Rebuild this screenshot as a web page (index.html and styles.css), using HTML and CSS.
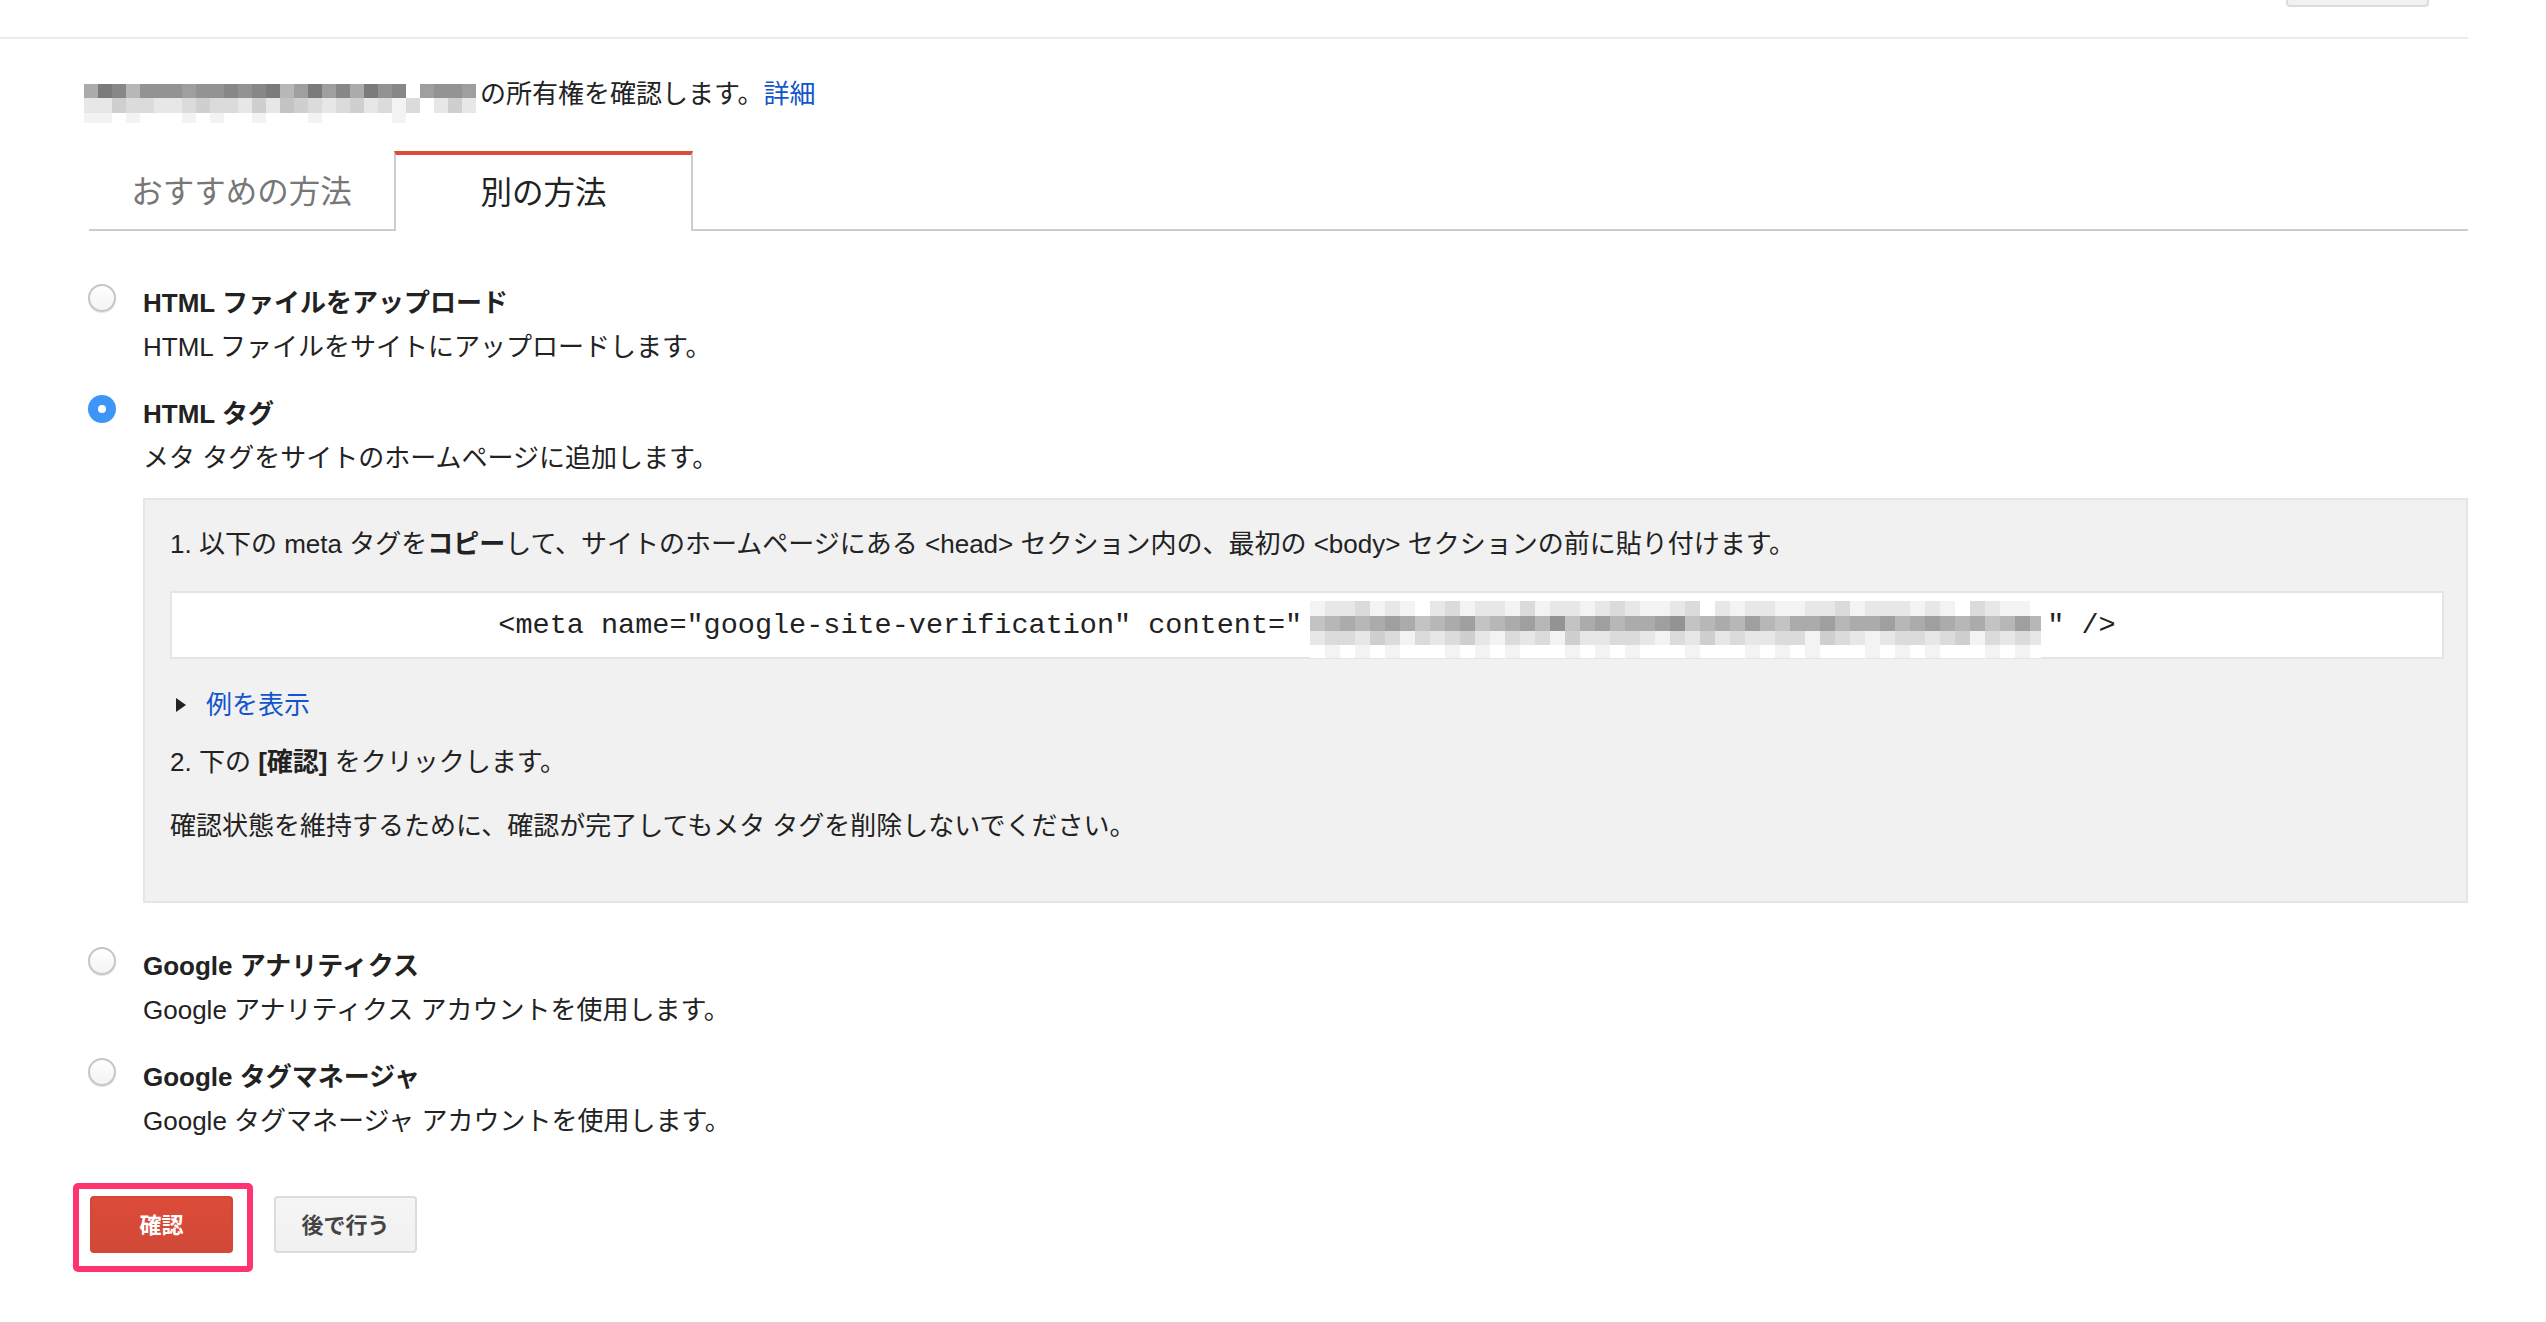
FILE: index.html
```html
<!DOCTYPE html>
<html lang="ja">
<head>
<meta charset="utf-8">
<title>所有権の確認</title>
<link rel="stylesheet" href="styles.css">
</head>
<body>

<div id="header">
  <button class="header-btn" type="button"></button>
</div>

<div id="main">
  <div class="intro">
    <span class="mosaic mosaic-domain" id="domainMosaic"></span>
    <span class="intro-text">の所有権を確認します。<a href="#">詳細</a></span>
  </div>

  <div class="tabs">
    <div class="tab">おすすめの方法</div>
    <div class="tab active">別の方法</div>
  </div>

  <div class="methods">
    <div class="option">
      <span class="radio"></span>
      <div class="option-body">
        <div class="option-title">HTML ファイルをアップロード</div>
        <div class="option-desc">HTML ファイルをサイトにアップロードします。</div>
      </div>
    </div>

    <div class="option">
      <span class="radio checked"></span>
      <div class="option-body">
        <div class="option-title">HTML タグ</div>
        <div class="option-desc">メタ タグをサイトのホームページに追加します。</div>

        <div class="panel">
          <div class="step">1. 以下の meta タグを<b>コピー</b>して、サイトのホームページにある &lt;head&gt; セクション内の、最初の &lt;body&gt; セクションの前に貼り付けます。</div>
          <div class="code-box">
            <span class="code">&lt;meta name="google-site-verification" content="</span><span class="mosaic mosaic-token" id="tokenMosaic"></span><span class="code">" /&gt;</span>
          </div>
          <div class="toggle"><span class="arrow"></span><a href="#">例を表示</a></div>
          <div class="step step-2">2. 下の <b>[確認]</b> をクリックします。</div>
          <div class="step step-note">確認状態を維持するために、確認が完了してもメタ タグを削除しないでください。</div>
        </div>
      </div>
    </div>

    <div class="option">
      <span class="radio"></span>
      <div class="option-body">
        <div class="option-title">Google アナリティクス</div>
        <div class="option-desc">Google アナリティクス アカウントを使用します。</div>
      </div>
    </div>

    <div class="option">
      <span class="radio"></span>
      <div class="option-body">
        <div class="option-title">Google タグマネージャ</div>
        <div class="option-desc">Google タグマネージャ アカウントを使用します。</div>
      </div>
    </div>
  </div>

  <div class="actions">
    <div class="highlight">
      <button class="btn btn-primary" type="button">確認</button>
    </div>
    <button class="btn btn-secondary" type="button">後で行う</button>
  </div>
</div>

<script src="script.js"></script>
</body>
</html>
```

FILE: styles.css
```css
body { margin: 0; background: #fff; color: #222; font-family: "Liberation Sans", "Noto Sans CJK JP", sans-serif; font-size: 26px; }
a { color: #1155cc; text-decoration: none; }
b { font-weight: bold; }

/* top bar */
#header { width: 2468px; height: 37px; border-bottom: 2px solid #ebebeb; display: flex; justify-content: flex-end; }
.header-btn { width: 143px; height: 40px; margin: -33px 39px 0 0; background: #f1f1f1; border: 2px solid #dcdcdc; border-radius: 4px; }

#main { width: 2380px; margin-left: 88px; }

/* intro line with blurred domain */
.intro { display: flex; align-items: flex-start; height: 44px; margin-top: 33px; }
.intro-text { line-height: 44px; margin-left: 4px; }
.mosaic { display: inline-block; flex: none; }
.mosaic svg { display: block; }
.mosaic-domain { width: 392px; height: 39px; margin: 12px 0 0 -4px; }

/* tabs */
.tabs { display: flex; margin: 35px 0 0 1px; border-bottom: 2px solid #ccc; }
.tab { width: 305px; height: 78px; display: flex; align-items: center; justify-content: center; font-size: 31.5px; color: #777; box-sizing: border-box; padding-bottom: 3px; }
.tab.active { width: 299px; height: 80px; margin-bottom: -2px; padding-bottom: 7px; background: #fff; color: #222; border-top: 4px solid #dd4b39; border-left: 2px solid #ccc; border-right: 2px solid #ccc; }

/* options */
.methods { margin-top: 50px; }
.option { display: flex; margin-bottom: 23px; }
.option-body { flex: 1; }
.option-title { line-height: 44px; font-weight: bold; }
.option-desc { line-height: 44px; }
.radio { flex: none; width: 28px; height: 28px; margin: 3px 27px 0 0; box-sizing: border-box; border-radius: 50%; border: 2px solid #c6c6c6; background: linear-gradient(#fff, #f3f3f3); box-shadow: 0 1px 1px rgba(0, 0, 0, 0.12); position: relative; }
.radio.checked { border: none; background: #3d95f7; box-shadow: none; }
.radio.checked::after { content: ""; position: absolute; left: 10px; top: 10px; width: 8px; height: 8px; border-radius: 50%; background: #fff; }

/* meta tag instructions */
.panel { margin: 18px 0 18px; padding: 22px 22px 53px 25px; background: #f1f1f1; border: 2px solid #e5e5e5; }
.step { line-height: 44px; }
.step-2 { margin-top: 13px; }
.step-note { margin-top: 20px; }
.code-box { margin-top: 25px; height: 68px; box-sizing: border-box; background: #fff; border: 2px solid #e5e5e5; display: flex; align-items: center; justify-content: center; }
.code { font-family: "Liberation Mono", monospace; font-size: 28.5px; white-space: pre; color: #222; }
.mosaic-token { width: 731px; height: 57px; margin: 9px 6px 0 8px; overflow: hidden; }
.toggle { display: flex; align-items: center; margin-top: 24px; line-height: 44px; }
.arrow { width: 0; height: 0; margin: 0 20px 0 6px; border-left: 10px solid #222; border-top: 7px solid transparent; border-bottom: 7px solid transparent; }

/* buttons */
.actions { display: flex; align-items: flex-start; margin: 40px 0 0 -15px; }
.highlight { display: flex; padding: 7px 14px 13px 11px; border: 6px solid #ff3370; border-radius: 5px; }
.btn { width: 143px; height: 57px; border-radius: 4px; font-family: "Liberation Sans", "Noto Sans CJK JP", sans-serif; font-size: 22px; font-weight: bold; padding: 0 0 3px; }
.btn-primary { background: linear-gradient(#dd4b39, #d14836); border: 2px solid #d14836; color: #fff; }
.btn-secondary { margin: 13px 0 0 21px; background: linear-gradient(#f5f5f5, #f1f1f1); border: 2px solid #dcdcdc; color: #444; }
```

FILE: script.js
```js
// blurred-out values, one hex digit per block (0 = white, higher = darker)
var domainRows = [
  "7ba6999899a9ab68b8a7b9a08998",
  "2243322343324254323423130242",
  "1101000101001000100000100000"
];
var tokenRows = [
  "1223121023122131221232112302122112231222121032110",
  "5676787567856786957867789567686577867786787675686",
  "2332431323421323142233213242322331432123323413232",
  "0101010001010100010101000100010101000101010001010"
];

function drawMosaic(id, rows, cell, heights) {
  var ns = "http://www.w3.org/2000/svg";
  var svg = document.createElementNS(ns, "svg");
  var w = rows[0].length * cell;
  var h = 0;
  heights.forEach(function (x) { h += x; });
  svg.setAttribute("width", w);
  svg.setAttribute("height", h);
  var y = 0;
  rows.forEach(function (row, r) {
    for (var i = 0; i < row.length; i++) {
      var g = 255 - parseInt(row[i], 16) * 12;
      var rect = document.createElementNS(ns, "rect");
      rect.setAttribute("x", i * cell);
      rect.setAttribute("y", y);
      rect.setAttribute("width", cell);
      rect.setAttribute("height", heights[r]);
      rect.setAttribute("fill", "rgb(" + g + "," + g + "," + g + ")");
      svg.appendChild(rect);
    }
    y += heights[r];
  });
  document.getElementById(id).appendChild(svg);
}

drawMosaic("domainMosaic", domainRows, 14, [14, 15, 10]);
drawMosaic("tokenMosaic", tokenRows, 15, [15, 15, 14, 13]);
```
